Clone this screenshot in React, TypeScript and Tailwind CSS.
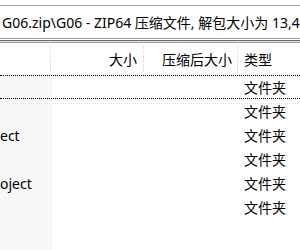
const cjk = { fontFamily: '"Segoe UI", "Noto Sans", "Noto Sans CJK SC", sans-serif' };

const rows = [
  { name: '', type: '文件夹' },
  { name: '', type: '文件夹' },
  { name: 'ect', type: '文件夹' },
  { name: '', type: '文件夹' },
  { name: 'oject', type: '文件夹' },
  { name: '', type: '文件夹' },
];

export default function App() {
  return (
    <div className="w-[300px] h-[250px] overflow-hidden bg-white text-black text-[14px]" style={cjk}>
      {/* address bar */}
      <div className="h-[5px]" />
      <div className="h-px bg-[#a0a0a0]" />
      <div className="h-[32px] flex items-center pl-[2px] whitespace-nowrap overflow-hidden">
        G06.zip\G06 - ZIP64 压缩文件, 解包大小为 13,456,789 字节
      </div>
      <div className="h-px bg-[#a0a0a0]" />
      <div className="h-px bg-white" />
      <div className="h-px bg-[#696969]" />
      <div className="h-px bg-[#e3e3e3]" />
      <div className="h-px bg-[#a0a0a0]" />

      {/* header */}
      <div className="h-[32px] flex items-stretch">
        <div className="w-[51px] border-r border-dashed border-[#e0e0e0] my-[3px]" />
        <div className="w-[93px] flex items-center justify-end pr-[6px] border-r border-dashed border-[#e0e0e0] my-[3px]">
          大小
        </div>
        <div className="w-[94px] flex items-center justify-end pr-[5px] border-r border-dashed border-[#e0e0e0] my-[3px]">
          压缩后大小
        </div>
        <div className="flex-1 flex items-center pl-[6px]">类型</div>
      </div>

      {/* rows */}
      <div className="relative">
        <div className="absolute left-0 top-0 w-[52px] h-[200px] bg-[#f7f7f7]" />
        {rows.map((r, i) => (
          <div
            key={i}
            className={`relative h-[24px] flex items-center ${
              i === 0 ? 'border-y border-dotted border-black' : ''
            }`}
          >
            <div className="w-[52px] overflow-hidden whitespace-nowrap">{r.name}</div>
            <div className="w-[192px]" />
            <div className="flex-1 whitespace-nowrap">{r.type}</div>
          </div>
        ))}
      </div>
    </div>
  );
}
